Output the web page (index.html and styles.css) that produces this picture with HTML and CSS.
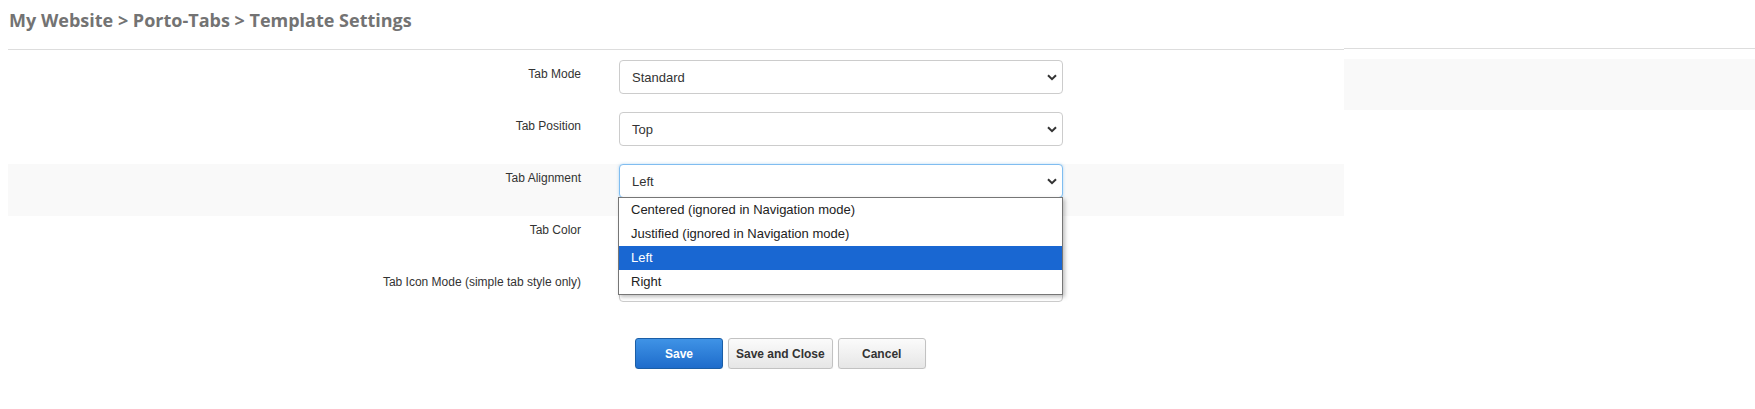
FILE: index.html
```html
<!DOCTYPE html>
<html>
<head>
<meta charset="utf-8">
<link rel="stylesheet" href="styles.css">
</head>
<body>
<div class="page">
  <div class="main">
    <div class="header">
      <h1 class="title">My Website &gt; Porto-Tabs &gt; Template Settings</h1>
    </div>
    <div class="form">
      <div class="row">
        <div class="label">Tab Mode</div>
        <div class="field">
          <div class="select"><span>Standard</span><svg class="chev" viewBox="0 0 10 7" width="10" height="7"><path d="M1 1.2 L5 5.2 L9 1.2" fill="none" stroke="#333" stroke-width="2"/></svg></div>
        </div>
      </div>
      <div class="row">
        <div class="label">Tab Position</div>
        <div class="field">
          <div class="select"><span>Top</span><svg class="chev" viewBox="0 0 10 7" width="10" height="7"><path d="M1 1.2 L5 5.2 L9 1.2" fill="none" stroke="#333" stroke-width="2"/></svg></div>
        </div>
      </div>
      <div class="row shaded">
        <div class="label">Tab Alignment</div>
        <div class="field">
          <div class="select focused"><span>Left</span><svg class="chev" viewBox="0 0 10 7" width="10" height="7"><path d="M1 1.2 L5 5.2 L9 1.2" fill="none" stroke="#333" stroke-width="2"/></svg></div>
          <ul class="dropdown">
            <li>Centered (ignored in Navigation mode)</li>
            <li>Justified (ignored in Navigation mode)</li>
            <li class="selected">Left</li>
            <li>Right</li>
          </ul>
        </div>
      </div>
      <div class="row">
        <div class="label">Tab Color</div>
        <div class="field">
          <div class="select"><span></span><svg class="chev" viewBox="0 0 10 7" width="10" height="7"><path d="M1 1.2 L5 5.2 L9 1.2" fill="none" stroke="#333" stroke-width="2"/></svg></div>
        </div>
      </div>
      <div class="row">
        <div class="label">Tab Icon Mode (simple tab style only)</div>
        <div class="field">
          <div class="select"><span></span><svg class="chev" viewBox="0 0 10 7" width="10" height="7"><path d="M1 1.2 L5 5.2 L9 1.2" fill="none" stroke="#333" stroke-width="2"/></svg></div>
        </div>
      </div>
      <div class="actions">
        <button class="btn primary">Save</button>
        <button class="btn">Save and Close</button>
        <button class="btn">Cancel</button>
      </div>
    </div>
  </div>
  <div class="aside">
    <div class="aside-header"></div>
    <div class="aside-box"></div>
  </div>
</div>
</body>
</html>
```

FILE: styles.css
```css
html, body {
  margin: 0;
  padding: 0;
  background: #fff;
}
body {
  font-family: "Liberation Sans", Arial, sans-serif;
  color: #333;
}
.page {
  display: flex;
  padding-left: 8px;
}
.main {
  width: 1336px;
  flex: none;
}
.header {
  padding-top: 8px;
  height: 41px;
  border-bottom: 1px solid #ddd;
}
.title {
  margin: 0;
  padding-left: 1px;
  font-family: "Open Sans", sans-serif;
  font-weight: 700;
  font-size: 18px;
  line-height: 24px;
  color: #737373;
}
.form {
  padding-top: 10px;
}
.row {
  display: flex;
  height: 52px;
}
.row.shaded {
  background: #f9f9f9;
}
.label {
  width: 573px;
  flex: none;
  text-align: right;
  font-size: 12px;
  line-height: 14px;
  padding-top: 7px;
  color: #333;
}
.field {
  margin-left: 38px;
  width: 444px;
  position: relative;
}
.select {
  height: 34px;
  box-sizing: border-box;
  border: 1px solid #ccc;
  border-radius: 4px;
  background: #fff;
  display: flex;
  align-items: center;
  justify-content: space-between;
  padding: 0 5px 0 12px;
  font-size: 13px;
  color: #333;
}
.select.focused {
  border-color: #80bdf0;
  box-shadow: 0 0 3px rgba(102, 175, 233, 0.5);
}
.chev {
  display: block;
}
.dropdown {
  position: absolute;
  top: 33px;
  left: -1px;
  width: 445px;
  box-sizing: border-box;
  margin: 0;
  padding: 0;
  list-style: none;
  background: #fff;
  border: 1px solid #767676;
  box-shadow: 2px 2px 4px rgba(0, 0, 0, 0.25);
  z-index: 10;
  font-size: 13px;
  color: #222;
}
.dropdown li {
  height: 24px;
  line-height: 24px;
  padding-left: 12px;
}
.dropdown li.selected {
  background: #1967d2;
  color: #fff;
}
.actions {
  display: flex;
  gap: 5px;
  margin-top: 18px;
  padding-left: 627px;
}
.btn {
  min-width: 88px;
  height: 31px;
  padding: 0 7px;
  box-sizing: border-box;
  font-family: "Liberation Sans", Arial, sans-serif;
  font-weight: 700;
  font-size: 12px;
  color: #333;
  border: 1px solid #c2c2c2;
  border-radius: 3px;
  background: linear-gradient(#fbfbfb, #e6e6e6);
  box-shadow: 0 1px 1px rgba(0, 0, 0, 0.08);
}
.btn.primary {
  color: #fff;
  border-color: #1b5ea6;
  background: linear-gradient(#3f93e6, #1e6ccb);
}
.aside {
  flex: 1;
}
.aside-header {
  height: 48px;
  border-bottom: 1px solid #ddd;
}
.aside-box {
  margin-top: 10px;
  height: 51px;
  background: #f9f9f9;
}
```
